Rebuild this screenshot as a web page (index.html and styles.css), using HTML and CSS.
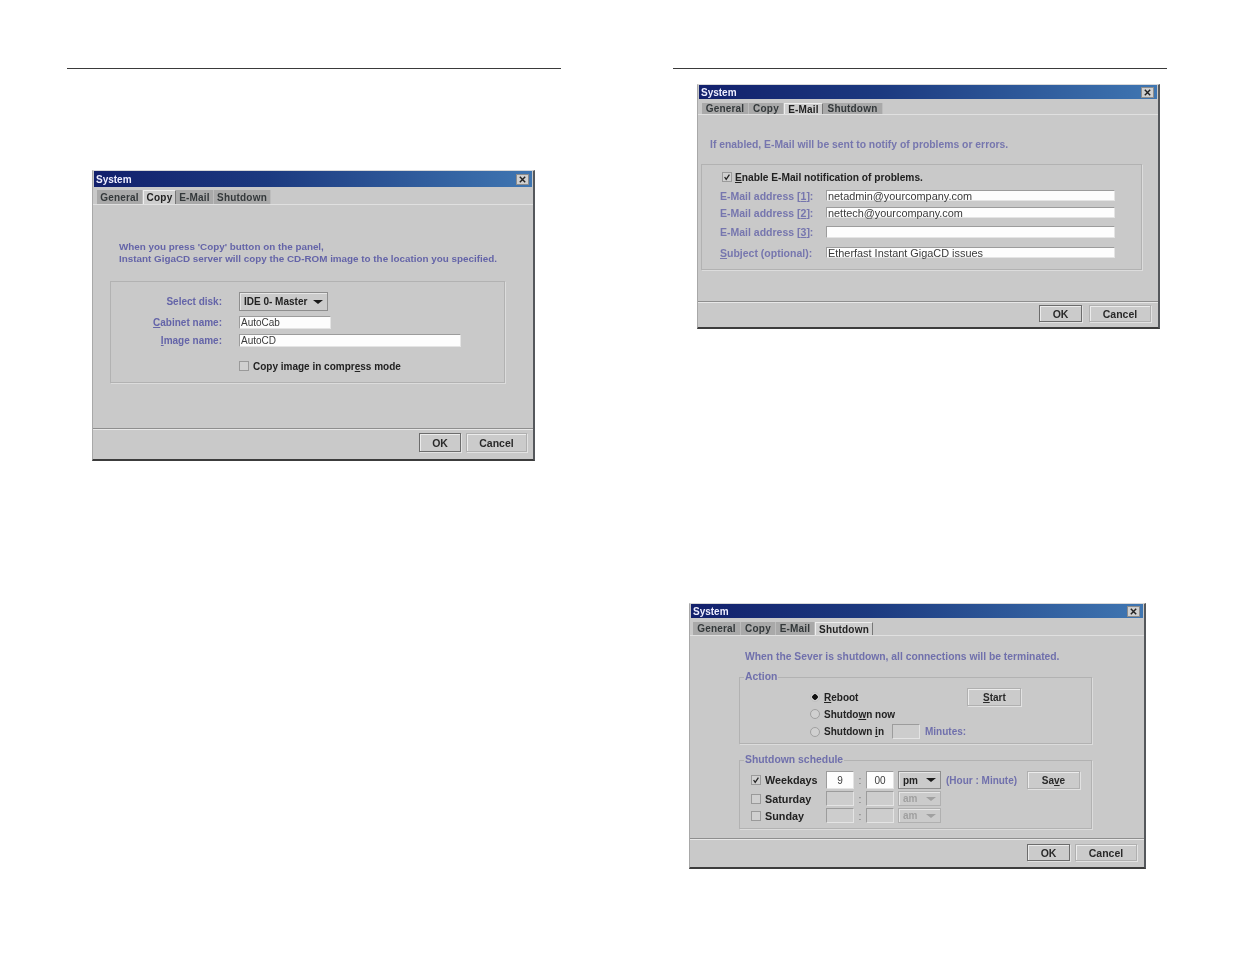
FILE: index.html
```html
<!DOCTYPE html>
<html lang="en">
<head>
<meta charset="utf-8">
<title>System dialogs</title>
<link rel="stylesheet" href="styles.css">
</head>
<body>
<div class="spread">
  <section class="page page-left">
    <hr class="rule">
    <div class="dialog d-copy">
      <div class="titlebar"><span>System</span><span class="close"><svg viewBox="0 0 10 10"><path d="M2 2l6 6M8 2l-6 6"/></svg></span></div>
      <div class="tabs">
        <span class="tab t-a">General</span><span class="tab active t-b">Copy</span><span class="tab t-c">E-Mail</span><span class="tab t-d">Shutdown</span>
      </div>
      <div class="body">
        <p class="msg">When you press 'Copy' button on the panel,<br>Instant GigaCD server will copy the CD-ROM image to the location you specified.</p>
        <div class="group">
          <div class="row r-19"><label class="lbl">Select disk:</label><span class="select sel-disk">IDE 0- Master<i class="arrow"></i></span></div>
          <div class="row r-13"><label class="lbl"><u>C</u>abinet name:</label><span class="input in-cab">AutoCab</span></div>
          <div class="row r-13"><label class="lbl"><u>I</u>mage name:</label><span class="input in-img">AutoCD</span></div>
          <div class="row r-check"><span class="check"></span><span class="strong">Copy image in compr<u>e</u>ss mode</span></div>
        </div>
      </div>
      <div class="footer"><span class="btn ok focus">OK</span><span class="btn cancel">Cancel</span></div>
    </div>
  </section>

  <section class="page page-right">
    <hr class="rule">
    <div class="dialog d-mail">
      <div class="titlebar"><span>System</span><span class="close"><svg viewBox="0 0 10 10"><path d="M2 2l6 6M8 2l-6 6"/></svg></span></div>
      <div class="tabs">
        <span class="tab t-a">General</span><span class="tab t-b">Copy</span><span class="tab active t-c">E-Mail</span><span class="tab t-d">Shutdown</span>
      </div>
      <div class="body">
        <p class="msg">If enabled, E-Mail will be sent to notify of problems or errors.</p>
        <div class="group">
          <div class="row r-enable"><span class="check on"><svg viewBox="0 0 10 10"><path d="M2 5l2 3 4-6"/></svg></span><span class="strong"><u>E</u>nable E-Mail notification of problems.</span></div>
          <div class="row m-a"><label class="lbl">E-Mail address [<u>1</u>]:</label><span class="input in-mail">netadmin@yourcompany.com</span></div>
          <div class="row m-b"><label class="lbl">E-Mail address [<u>2</u>]:</label><span class="input in-mail">nettech@yourcompany.com</span></div>
          <div class="row m-c"><label class="lbl">E-Mail address [<u>3</u>]:</label><span class="input in-mail"></span></div>
          <div class="row m-d"><label class="lbl"><u>S</u>ubject (optional):</label><span class="input in-mail">Etherfast Instant GigaCD issues</span></div>
        </div>
      </div>
      <div class="footer"><span class="btn ok focus">OK</span><span class="btn cancel">Cancel</span></div>
    </div>

    <div class="dialog d-shut">
      <div class="titlebar"><span>System</span><span class="close"><svg viewBox="0 0 10 10"><path d="M2 2l6 6M8 2l-6 6"/></svg></span></div>
      <div class="tabs">
        <span class="tab t-a">General</span><span class="tab t-b">Copy</span><span class="tab t-c">E-Mail</span><span class="tab active t-d">Shutdown</span>
      </div>
      <div class="body">
        <p class="msg">When the Sever is shutdown, all connections will be terminated.</p>
        <div class="group action">
          <span class="legend">Action</span>
          <div class="row a-1"><span class="radio on"></span><span class="strong"><u>R</u>eboot</span><span class="btn start"><span><u>S</u>tart</span></span></div>
          <div class="row a-2"><span class="radio"></span><span class="strong">Shutdo<u>w</u>n now</span></div>
          <div class="row a-3"><span class="radio"></span><span class="strong">Shutdown <u>i</u>n</span><span class="input in-min"></span><span class="note">Minutes:</span></div>
        </div>
        <div class="group schedule">
          <span class="legend">Shutdown schedule</span>
          <div class="row s-1"><span class="check on"><svg viewBox="0 0 10 10"><path d="M2 5l2 3 4-6"/></svg></span><span class="strong day">Weekdays</span><span class="input time">9</span><span class="colon">:</span><span class="input time">00</span><span class="select sel-ampm">pm<i class="arrow"></i></span><span class="note hint">(Hour : Minute)</span><span class="btn save"><span>Sa<u>v</u>e</span></span></div>
          <div class="row s-2"><span class="check"></span><span class="strong day">Saturday</span><span class="input time off"></span><span class="colon">:</span><span class="input time off"></span><span class="select sel-ampm off">am<i class="arrow"></i></span></div>
          <div class="row s-2"><span class="check"></span><span class="strong day">Sunday</span><span class="input time off"></span><span class="colon">:</span><span class="input time off"></span><span class="select sel-ampm off">am<i class="arrow"></i></span></div>
        </div>
      </div>
      <div class="footer"><span class="btn ok focus">OK</span><span class="btn cancel">Cancel</span></div>
    </div>
  </section>
</div>
</body>
</html>
```

FILE: styles.css
```css
* { box-sizing: border-box; }
html, body { margin: 0; padding: 0; background: #fff; }
body { font-family: "Liberation Sans", Arial, sans-serif; font-size: 10.5px; color: #1c1c1c; }

.spread { display: flex; width: 1235px; height: 954px; overflow: hidden; }
.page { width: 494px; padding-top: 68px; }
.page-left { margin-left: 67px; }
.page-right { margin-left: 112px; }
.rule { height: 1px; margin: 0; border: 0; background: #3a3a3a; }

.dialog {
  display: flex; flex-direction: column;
  background: #c9c9c9;
  border-right: 2px solid #55585c;
  border-bottom: 2px solid #3c3c3c;
  border-left: 1px solid #a8a8a8;
  border-top: 1px solid #d8d8d8;
  filter: blur(0.75px);
}
.d-copy { width: 443px; height: 291px; margin: 101px 0 0 25px; }
.d-mail { width: 463px; height: 245px; margin: 15px 0 0 24px; }
.d-shut { width: 457px; height: 266px; margin: 274px 0 0 16px; }

.titlebar {
  display: flex; align-items: center; justify-content: space-between;
  height: 16px; margin: 0 1px; padding: 0 3px 0 2px;
  background: linear-gradient(90deg, #12206c 0%, #1c3a80 40%, #3f76b2 100%);
  color: #eef; font-weight: 700; font-size: 10px;
}
.d-mail .titlebar, .d-shut .titlebar { height: 14px; }
.close {
  display: flex; width: 13px; height: 11px;
  background: #cfcfcf; border: 1px solid #8c8c8c;
}
.close svg { width: 100%; height: 100%; }
.close path { fill: none; stroke: #222; stroke-width: 1.6; }

.tabs { display: flex; height: 18px; padding: 3px 0 0 4px; border-bottom: 1px solid #e0e0e0; }
.d-mail .tabs { height: 16px; padding: 4px 0 0 4px; }
.d-shut .tabs { height: 18px; padding: 4px 0 0 3px; }
.tab {
  display: flex; align-items: center; justify-content: center;
  background: #a9a9a9; color: #33383a;
  font-size: 10px; font-weight: 700; letter-spacing: 0.2px;
  border-right: 1px solid #bdbdbd;
}
.tab.active { background: #cecece; color: #222; border-top: 1px solid #eee; border-left: 1px solid #eee; border-right: 1px solid #777; }
.d-copy .t-a { width: 46px; } .d-copy .t-b { width: 33px; } .d-copy .t-c { width: 38px; } .d-copy .t-d { width: 57px; }
.d-mail .t-a { width: 47px; } .d-mail .t-b { width: 35px; } .d-mail .t-c { width: 39px; } .d-mail .t-d { width: 60px; }
.d-shut .t-a { width: 48px; } .d-shut .t-b { width: 35px; } .d-shut .t-c { width: 39px; } .d-shut .t-d { width: 58px; }

.body { flex: 1; min-height: 0; }
.msg { margin: 0; color: #6464a8; line-height: 12px; font-weight: 700; font-size: 9.86px; }
.d-copy .msg { margin: 36px 0 16px 26px; }
.d-mail .msg { margin: 24px 0 13px 12px; font-size: 10.36px; color: #7676ae; }
.d-shut .msg { margin: 15px 0 14px 55px; font-size: 10.33px; color: #7070ac; }

.group { position: relative; border: 1px solid #b2b2b2; box-shadow: 1px 1px 0 #dcdcdc; }
.d-copy .group { width: 395px; height: 102px; margin-left: 17px; padding-top: 10px; }
.d-mail .group { width: 441px; height: 106px; margin-left: 3px; padding: 6px 0 0 18px; }
.action { width: 353px; height: 67px; margin-left: 49px; padding: 10px 0 0 70px; }
.schedule { width: 353px; height: 69px; margin: 16px 0 0 49px; padding: 10px 11px 0 11px; }
.legend {
  position: absolute; top: -7px; left: 4px; padding: 0 1px;
  background: #c9c9c9; color: #7070ac; font-size: 10.4px; font-weight: 700; line-height: 12px;
}

.row { display: flex; align-items: center; }
.r-19 { height: 19px; }
.r-13 { height: 13px; margin-top: 5px; }
.r-check { height: 12px; margin: 13px 0 0 128px; gap: 4px; }
.r-enable { height: 12px; gap: 3px; margin: 0 0 7px 2px; }
.m-a { height: 11px; }
.m-b { height: 11px; margin-top: 6px; }
.m-c { height: 12px; margin-top: 8px; }
.m-d { height: 11px; margin-top: 9px; }
.a-1 { height: 18px; }
.a-2 { height: 12px; margin-top: 2px; }
.a-3 { height: 15px; margin-top: 4px; }
.s-1 { height: 18px; }
.s-2 { height: 15px; margin-top: 2px; }
.a-1, .a-2, .a-3 { gap: 4px; }

.lbl { color: #6464a8; font-weight: 700; font-size: 10px; }
.d-copy .lbl { width: 111px; margin-right: 17px; text-align: right; }
.d-mail .lbl { width: 106px; font-size: 10.5px; color: #7676ae; white-space: nowrap; }
.strong { color: #222; font-weight: 700; font-size: 10px; }
.r-enable .strong { font-size: 10.2px; }
.note { color: #7070ac; font-weight: 700; font-size: 10px; margin-left: 1px; }
.hint { margin-left: 5px; font-size: 10px; white-space: nowrap; }

.input {
  display: flex; align-items: center;
  height: 100%; padding-left: 1px;
  background: #fdfdfd; border: 1px solid #9c9c9c; border-bottom-color: #e4e4e4; border-right-color: #e4e4e4;
  color: #3a3a3a; font-size: 10px; white-space: nowrap;
}
.in-cab { width: 92px; }
.in-img { width: 222px; }
.in-mail { width: 289px; font-size: 10.9px; }
.in-min { width: 28px; margin-left: 4px; background: #cdcdcd; }
.time { width: 28px; justify-content: center; padding: 0; }
.time.off { background: #cdcdcd; }
.day { width: 61px; margin-left: 4px; font-size: 10.8px; }
.colon { width: 12px; text-align: center; color: #777; }

.select {
  display: flex; align-items: center; justify-content: space-between;
  height: 100%; padding: 0 4px;
  background: #cbcbcb; border: 1px solid #8e8e8e; box-shadow: inset 1px 1px 0 #e6e6e6;
  color: #222; font-weight: 700; font-size: 10px;
}
.sel-disk { width: 89px; }
.sel-ampm { width: 43px; margin-left: 4px; }
.sel-ampm.off { color: #a0a0a0; border-color: #b0b0b0; }
.arrow { width: 0; height: 0; border: 4px solid transparent; border-top: 4px solid #1a1a1a; border-bottom: 0; border-left-width: 5px; border-right-width: 5px; }
.off .arrow { border-top-color: #a0a0a0; }

.check {
  display: flex; flex: none; width: 10px; height: 10px;
  background: #d0d0d0; border: 1px solid #9a9a9a;
}
.check svg { width: 100%; height: 100%; }
.check path { fill: none; stroke: #222; stroke-width: 1.6; }
.radio {
  flex: none; width: 10px; height: 10px; border-radius: 50%;
  background: #d0d0d0; border: 1px solid #a0a0a0;
}
.radio.on { background: radial-gradient(circle, #111 0 2.5px, #d0d0d0 3px); border-color: #c0c0c0; }

.footer {
  display: flex; justify-content: flex-end; align-items: flex-start; gap: 5px;
  padding: 4px 6px 0 0;
  border-top: 1px solid #8e8e8e; box-shadow: inset 0 1px 0 #e8e8e8;
}
.d-copy .footer { height: 31px; }
.d-mail .footer { height: 26px; padding: 3px 7px 0 0; gap: 7px; }
.d-mail .footer .btn { height: 17px; }
.d-shut .footer { height: 29px; padding: 5px 7px 0 0; }
.d-shut .footer .btn { height: 17px; }
.btn {
  display: flex; align-items: center; justify-content: center;
  height: 19px;
  background: #cbcbcb; border: 1px solid #b0b0b0; box-shadow: inset 1px 1px 0 #ececec, 1px 1px 0 #e2e2e2;
  color: #2a2a2a; font-weight: 700; font-size: 10.5px;
}
.ok { width: 43px; }
.cancel { width: 62px; }
.d-copy .ok { width: 42px; }
.d-copy .cancel { width: 61px; }
.focus { border-color: #6c6c6c; }
.start { width: 54px; height: 18px; margin-left: 105px; font-size: 10px; }
.save { width: 53px; height: 18px; margin-left: auto; font-size: 10px; }
```
